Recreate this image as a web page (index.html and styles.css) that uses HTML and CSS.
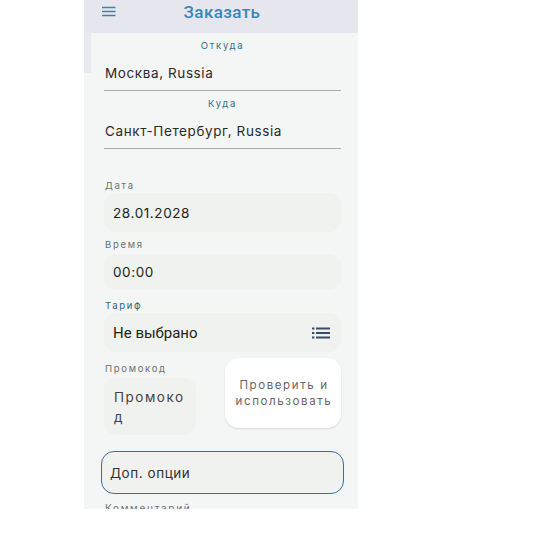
FILE: index.html
```html
<!DOCTYPE html>
<html lang="ru">
<head>
<meta charset="utf-8">
<title>Заказать</title>
<link rel="stylesheet" href="styles.css">
</head>
<body>
<div class="screen">
  <header class="topbar">
    <svg class="menu-icon" width="16" height="12" viewBox="0 0 16 12"><path d="M1 1.5h13.5M1 5.5h13.5M1 9.5h13.5" stroke="#3b83b0" stroke-width="1.5" fill="none"/></svg>
    <h1 class="title">Заказать</h1>
  </header>
  <div class="side-strip"></div>
  <main class="form">
    <section class="place">
      <div class="place-label">Откуда</div>
      <div class="place-value">Москва, Russia</div>
    </section>
    <section class="place">
      <div class="place-label second">Куда</div>
      <div class="place-value">Санкт-Петербург, Russia</div>
    </section>
    <div class="label date-label">Дата</div>
    <div class="field date-field">28.01.2028</div>
    <div class="label time-label">Время</div>
    <div class="field time-field">00:00</div>
    <div class="label tariff-label">Тариф</div>
    <div class="field tariff-field">
      <span>Не выбрано</span>
      <svg width="18" height="12" viewBox="0 0 18 12"><path d="M0 1.5h2.4M0 6h2.4M0 10.5h2.4M4 1.5h14M4 6h14M4 10.5h14" stroke="#3b4a66" stroke-width="2" fill="none"/></svg>
    </div>
    <div class="promo-row">
      <div class="promo-col">
        <div class="label promo-label">Промокод</div>
        <div class="promo-field">Промоко<br>д</div>
      </div>
      <button class="check-btn">Проверить и использовать</button>
    </div>
    <div class="options">Доп. опции</div>
    <div class="label comment-label">Комментарий</div>
  </main>
</div>
</body>
</html>
```
FILE: styles.css
```css
* { box-sizing: border-box; }
html, body { margin: 0; padding: 0; background: #fff; }
body { font-family: "Inter", "Liberation Sans", sans-serif; color: #222; }
.screen {
  position: relative;
  width: 274px;
  height: 509px;
  margin-left: 84px;
  background: #f4f5f5;
  overflow: hidden;
}
.topbar {
  position: relative;
  height: 33px;
  background: #e6e7ee;
  display: flex;
  align-items: flex-start;
  justify-content: center;
}
.menu-icon { position: absolute; left: 17px; top: 6px; }
.title {
  margin: 0 0 0 2px;
  font: 500 17px/24px "Roboto", sans-serif;
  letter-spacing: 0.4px;
  color: #3a86b8;
}
.side-strip { position: absolute; left: 0; top: 33px; width: 7px; height: 40px; background: #e9eaef; }
.form { padding: 0 17px 0 20px; }
.place-label {
  text-align: center;
  font-size: 9.5px;
  line-height: 12px;
  letter-spacing: 1.7px;
  color: #2f6f93;
  padding-top: 7px;
}
.place-value {
  height: 39px;
  padding: 11px 0 0 1px;
  font-size: 13.5px;
  line-height: 20px;
  letter-spacing: 0.6px;
  color: #2b2b2b;
  border-bottom: 1px solid #a9abad;
}
.label {
  font-size: 9.5px;
  line-height: 12px;
  letter-spacing: 1.7px;
  color: #6e7072;
  padding-left: 1px;
}
.date-label { margin-top: 31px; }
.time-label { margin-top: 7px; }
.tariff-label { margin-top: 10px; color: #2f6380; }
.field {
  display: flex;
  align-items: center;
  justify-content: space-between;
  padding: 0 11px 0 9px;
  background: #f0f2ef;
  border-radius: 12px;
  font-size: 13.5px;
  letter-spacing: 0.6px;
  color: #222;
}
.date-field { height: 39px; margin-top: 1px; }
.time-field { height: 36px; margin-top: 3px; }
.tariff-field {
  height: 39px;
  margin-top: 1px;
  font: 400 15px/20px "Roboto", sans-serif;
  letter-spacing: 0;
}
.promo-row { display: flex; justify-content: space-between; align-items: flex-start; margin-top: 6px; height: 77px; }
.promo-col { width: 92px; }
.promo-label { margin-top: 5px; }
.promo-field {
  height: 57px;
  margin-top: 3px;
  padding: 9px 9px 9px 10px;
  background: #f0f2ef;
  border-radius: 12px;
  font-size: 13.5px;
  line-height: 20px;
  letter-spacing: 1.5px;
  color: #444;
}
.check-btn {
  width: 116px;
  height: 70px;
  padding: 0 1px 0 3px;
  border: 0;
  border-radius: 14px;
  background: #fff;
  box-shadow: 0 1px 2px rgba(0,0,0,.12);
  font-family: inherit;
  font-size: 11.5px;
  line-height: 16px;
  letter-spacing: 1.6px;
  color: #666;
}
.options {
  display: flex;
  align-items: center;
  width: 243px;
  height: 43px;
  margin: 16px 0 0 -3px;
  padding-left: 8px;
  background: #f0f2ef;
  border: 1px solid #3f6d9c;
  border-radius: 13px;
  font-size: 13.5px;
  letter-spacing: 0.55px;
  color: #333;
}
.comment-label { margin-top: 8px; font-size: 10px; }
```
